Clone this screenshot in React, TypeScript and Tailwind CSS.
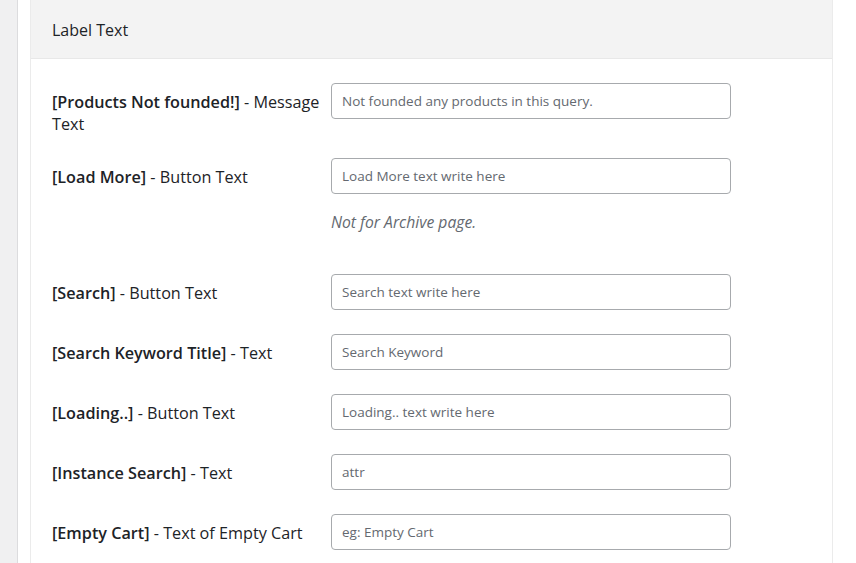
const rows: { bold: string; rest: string; placeholder: string; note?: string }[] = [
  { bold: "[Products Not founded!]", rest: " - Message Text", placeholder: "Not founded any products in this query." },
  { bold: "[Load More]", rest: " - Button Text", placeholder: "Load More text write here", note: "Not for Archive page." },
  { bold: "[Search]", rest: " - Button Text", placeholder: "Search text write here" },
  { bold: "[Search Keyword Title]", rest: " - Text", placeholder: "Search Keyword" },
  { bold: "[Loading..]", rest: " - Button Text", placeholder: "Loading.. text write here" },
  { bold: "[Instance Search]", rest: " - Text", placeholder: "attr" },
  { bold: "[Empty Cart]", rest: " - Text of Empty Cart", placeholder: "eg: Empty Cart" },
];

export default function App() {
  return (
    <div
      className="flex h-[563px] w-[856px] overflow-hidden bg-white text-[#1d2327]"
      style={{ fontFamily: '"Segoe UI", "Open Sans", "Noto Sans", sans-serif' }}
    >
      <div className="w-[18px] shrink-0 border-r border-[#dcdcde] bg-[#f0f0f1]" />
      <div className="w-[12px] shrink-0" />
      <div className="w-[803px] shrink-0 border-x border-[#ebebeb]">
        <div className="flex h-[59px] items-center border-b border-[#e8e8e8] bg-[#f3f3f3] pt-[2px] pl-[21px]">
          <h2 className="text-[16px] font-normal">Label Text</h2>
        </div>
        <div className="pt-3 pl-[21px]">
          {rows.map((r) => (
            <div key={r.bold} className="flex items-start">
              <div className="w-[279px] shrink-0 pt-[20px] pb-[11px] pr-1 text-[16.2px] leading-[22px]">
                <span className="font-semibold">{r.bold}</span>
                {r.rest}
              </div>
              <div className="py-3">
                <input
                  readOnly
                  placeholder={r.placeholder}
                  className="h-[36px] w-[400px] rounded-[4px] border border-[#a7aaad] bg-white px-[10px] text-[13.5px] text-[#50575e] outline-none placeholder:text-[#646970]"
                />
                {r.note && (
                  <p className="mt-[17px] mb-[17px] text-[15.7px] italic leading-[22px] text-[#646970]">{r.note}</p>
                )}
              </div>
            </div>
          ))}
        </div>
      </div>
    </div>
  );
}
